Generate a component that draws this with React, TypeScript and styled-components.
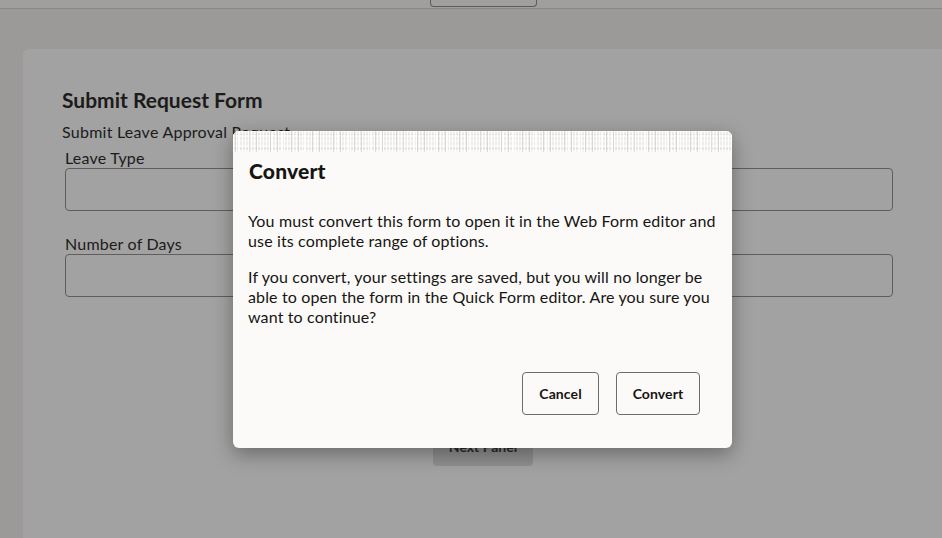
import styled, { createGlobalStyle } from "styled-components";

const GlobalStyle = createGlobalStyle`
  html, body {
    margin: 0;
    padding: 0;
    background: #9c9a98;
    font-family: Lato, "Noto Sans", sans-serif;
    overflow: hidden;
  }
  * { box-sizing: border-box; }
`;

const Page = styled.div`
  width: 942px;
  height: 538px;
  position: relative;
  overflow: hidden;
`;

const TopBar = styled.div`
  height: 9px;
  background: #a09f9d;
  border-bottom: 1px solid #8a8886;
  display: flex;
  justify-content: center;
`;

const TopButton = styled.div`
  width: 107px;
  height: 7px;
  margin-left: 24px;
  border: 1px solid #5c5b59;
  border-top: none;
  border-radius: 0 0 4px 4px;
`;

const Body = styled.div`
  padding: 40px 0 0 23px;
`;

const Card = styled.section`
  background: #a2a2a2;
  border-radius: 6px 0 0 0;
  height: 600px;
  padding: 39px 0 0 39px;
  color: #1c1b1a;
`;

const FormTitle = styled.h1`
  margin: 0;
  font-size: 21px;
  line-height: 24px;
  font-weight: 700;
`;

const FormSubtitle = styled.div`
  margin-top: 10px;
  font-size: 16px;
  line-height: 20px;
  letter-spacing: 0.25px;
`;

const Fields = styled.div`
  margin-top: 6px;
  padding-left: 3px;
  width: 831px;
  display: flex;
  flex-direction: column;
`;

const Field = styled.div<{ $gap?: number }>`
  margin-top: ${(p) => p.$gap ?? 0}px;
  display: flex;
  flex-direction: column;
`;

const Label = styled.label`
  font-size: 16px;
  line-height: 20px;
  letter-spacing: 0.2px;
`;

const Input = styled.div`
  height: 43px;
  border: 1px solid #5f5e5d;
  border-radius: 4px;
`;

const Actions = styled.div`
  margin-top: 135px;
  display: flex;
  justify-content: center;
  padding-left: 8px;
`;

const GhostButton = styled.div`
  width: 100px;
  height: 34px;
  border-radius: 4px;
  background: #8f8f8f;
  color: #2a2a2a;
  font-size: 14px;
  font-weight: 700;
  display: flex;
  align-items: center;
  justify-content: center;
  padding-bottom: 6px;
`;

const Dialog = styled.div`
  position: absolute;
  left: 233px;
  top: 131px;
  width: 499px;
  height: 317px;
  background: #fbfaf8;
  border-radius: 6px;
  box-shadow: 0 6px 20px rgba(0, 0, 0, 0.35);
  overflow: hidden;
  display: flex;
  flex-direction: column;
  color: #161513;
`;

const Texture = styled.div`
  height: 21px;
  background-color: #eeece8;
  background-image:
    repeating-linear-gradient(90deg, rgba(255, 255, 255, 0.95) 0 1px, transparent 1px 3px),
    repeating-linear-gradient(90deg, transparent 0 2px, rgba(200, 196, 191, 0.55) 2px 3px, transparent 3px 7px),
    repeating-linear-gradient(90deg, transparent 0 5px, rgba(255, 255, 255, 0.8) 5px 6px, transparent 6px 11px),
    repeating-linear-gradient(0deg, rgba(255, 255, 255, 0.6) 0 2px, transparent 2px 5px),
    repeating-linear-gradient(0deg, transparent 0 3px, rgba(215, 211, 206, 0.5) 3px 4px, transparent 4px 7px);
`;

const DialogTitle = styled.h2`
  margin: 7px 0 0 16px;
  font-size: 21px;
  line-height: 24px;
  font-weight: 900;
  letter-spacing: 0.2px;
`;

const DialogBody = styled.div`
  padding: 28px 16px 0 15px;
  font-size: 16px;
  line-height: 20px;
  letter-spacing: 0.14px;
  p {
    margin: 0 0 16px;
  }
`;

const Footer = styled.div`
  margin-top: auto;
  padding: 0 32px 33px 0;
  display: flex;
  justify-content: flex-end;
  gap: 17px;
`;

const Button = styled.button<{ $w: number }>`
  width: ${(p) => p.$w}px;
  height: 43px;
  border: 1px solid #6d6c6a;
  border-radius: 4px;
  background: transparent;
  color: #161513;
  font-family: Lato, "Noto Sans", sans-serif;
  font-size: 14px;
  font-weight: 700;
  letter-spacing: 0.1px;
  padding: 0;
`;

export default function App() {
  return (
    <>
      <GlobalStyle />
      <Page>
        <TopBar>
          <TopButton />
        </TopBar>
        <Body>
          <Card>
            <FormTitle>Submit Request Form</FormTitle>
            <FormSubtitle>Submit Leave Approval Request</FormSubtitle>
            <Fields>
              <Field>
                <Label>Leave Type</Label>
                <Input />
              </Field>
              <Field $gap={23}>
                <Label>Number of Days</Label>
                <Input />
              </Field>
              <Actions>
                <GhostButton>Next Panel</GhostButton>
              </Actions>
            </Fields>
          </Card>
        </Body>
        <Dialog role="dialog">
          <Texture />
          <DialogTitle>Convert</DialogTitle>
          <DialogBody>
            <p>
              You must convert this form to open it in the Web Form editor and
              use its complete range of options.
            </p>
            <p>
              If you convert, your settings are saved, but you will no longer be
              able to open the form in the Quick Form editor. Are you sure you
              want to continue?
            </p>
          </DialogBody>
          <Footer>
            <Button $w={77}>Cancel</Button>
            <Button $w={84}>Convert</Button>
          </Footer>
        </Dialog>
      </Page>
    </>
  );
}
